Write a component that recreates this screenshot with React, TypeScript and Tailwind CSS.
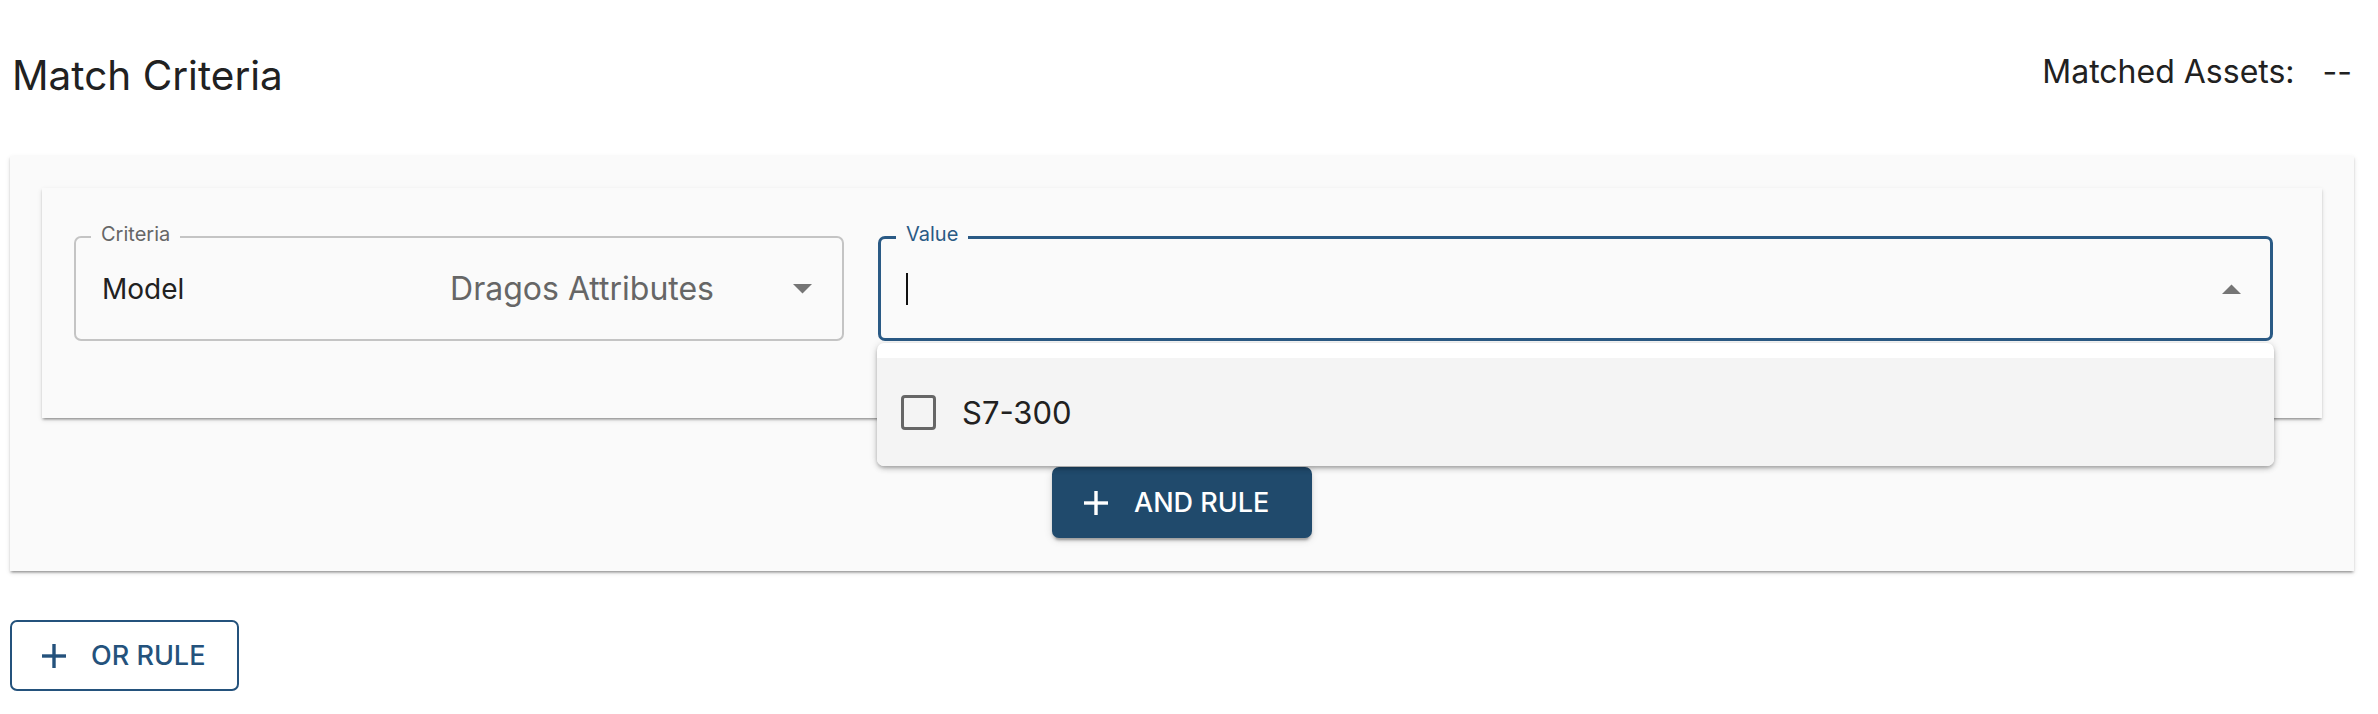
import React from "react";

function Plus({ className }: { className?: string }) {
  return (
    <svg className={className} width="24" height="24" viewBox="0 0 24 24" fill="currentColor">
      <rect x="0" y="10.3" width="24" height="3.4" />
      <rect x="10.3" y="0" width="3.4" height="24" />
    </svg>
  );
}

function Caret({ up }: { up?: boolean }) {
  return (
    <svg width="19" height="10" viewBox="0 0 19 10" className="text-[#757575]" fill="currentColor">
      {up ? <path d="M0 10 L9.5 0.5 L19 10 Z" /> : <path d="M0 0 L19 0 L9.5 9.5 Z" />}
    </svg>
  );
}

export default function App() {
  return (
    <div className="min-h-screen bg-white font-['Inter',sans-serif] text-[#212121]">
      {/* header */}
      <div className="flex items-start justify-between pl-[12px] pr-[26px] pt-[56px]">
        <h1 className="text-[40.5px] leading-[40px] font-normal">Match Criteria</h1>
        <div className="flex gap-[28px] text-[32px] leading-[31px]">
          <span>Matched Assets:</span>
          <span>--</span>
        </div>
      </div>

      {/* rule group */}
      <div className="mt-[60px] ml-[10px] w-[2344px] bg-[#fafafa] px-[32px] pt-[32px] pb-[33px] shadow-[0_3px_2px_-2px_rgba(0,0,0,0.25),0_2px_2px_0_rgba(0,0,0,0.14),0_2px_5px_0_rgba(0,0,0,0.12)]">
        <div className="flex h-[230px] items-start gap-[34px] bg-[#fafafa] pt-[48px] pl-[32px] pr-[49px] shadow-[0_3px_2px_-2px_rgba(0,0,0,0.25),0_2px_2px_0_rgba(0,0,0,0.14),0_2px_5px_0_rgba(0,0,0,0.12)]">
          {/* criteria select */}
          <div className="relative flex h-[105px] w-[770px] items-center rounded-[7px] border-2 border-[#c4c4c4] pl-[26px] pr-[30px]">
            <span className="absolute left-[15px] top-[-14px] bg-[#fafafa] px-[10px] text-[20px] leading-[20px] text-[#666]">
              Criteria
            </span>
            <span className="flex-1 text-[28px] leading-[28px]">Model</span>
            <span className="text-[32px] leading-[32px] text-[#666]">Dragos Attributes</span>
            <span className="ml-[79px] flex">
              <Caret />
            </span>
          </div>

          {/* value autocomplete */}
          <div className="relative flex-1">
            <div className="relative flex h-[105px] items-center rounded-[7px] border-[3px] border-[#2a5a85] pl-[25px] pr-[29px]">
              <span className="absolute left-[15px] top-[-15px] bg-[#fafafa] px-[10px] text-[20px] leading-[20px] text-[#2a5a85]">
                Value
              </span>
              <span className="h-[32px] w-[2px] bg-[#111]" />
              <span className="flex-1" />
              <Caret up />
            </div>
            <div className="absolute left-[-1px] right-[-1px] top-[calc(100%+2px)] z-10 overflow-hidden rounded-[7px] bg-white pt-[15px] shadow-[0_3px_6px_-1px_rgba(0,0,0,0.2),0_2px_3px_0_rgba(0,0,0,0.14),0_1px_8px_0_rgba(0,0,0,0.12)]">
              <div className="flex h-[108px] items-center gap-[26px] bg-[#f4f4f4] pl-[24px]">
                <span className="h-[35px] w-[35px] rounded-[4px] border-[3px] border-[#666]" />
                <span className="text-[31px] leading-[31px]">S7-300</span>
              </div>
            </div>
          </div>
        </div>

        <button className="mx-auto mt-[49px] flex h-[71px] w-[260px] items-center gap-[26px] rounded-[7px] bg-[#204a6c] pl-[32px] text-[27px] font-medium uppercase leading-[27px] text-white shadow-[0_5px_2px_-3px_rgba(0,0,0,0.2),0_3px_3px_0_rgba(0,0,0,0.14),0_2px_8px_0_rgba(0,0,0,0.12)]">
          <Plus />
          <span>And Rule</span>
        </button>
      </div>

      <button className="ml-[10px] mt-[49px] flex h-[71px] w-[229px] items-center gap-[25px] rounded-[7px] border-2 border-[#24527c] pl-[30px] text-[27px] font-medium uppercase leading-[27px] text-[#24527c]">
        <Plus />
        <span>Or Rule</span>
      </button>
    </div>
  );
}
